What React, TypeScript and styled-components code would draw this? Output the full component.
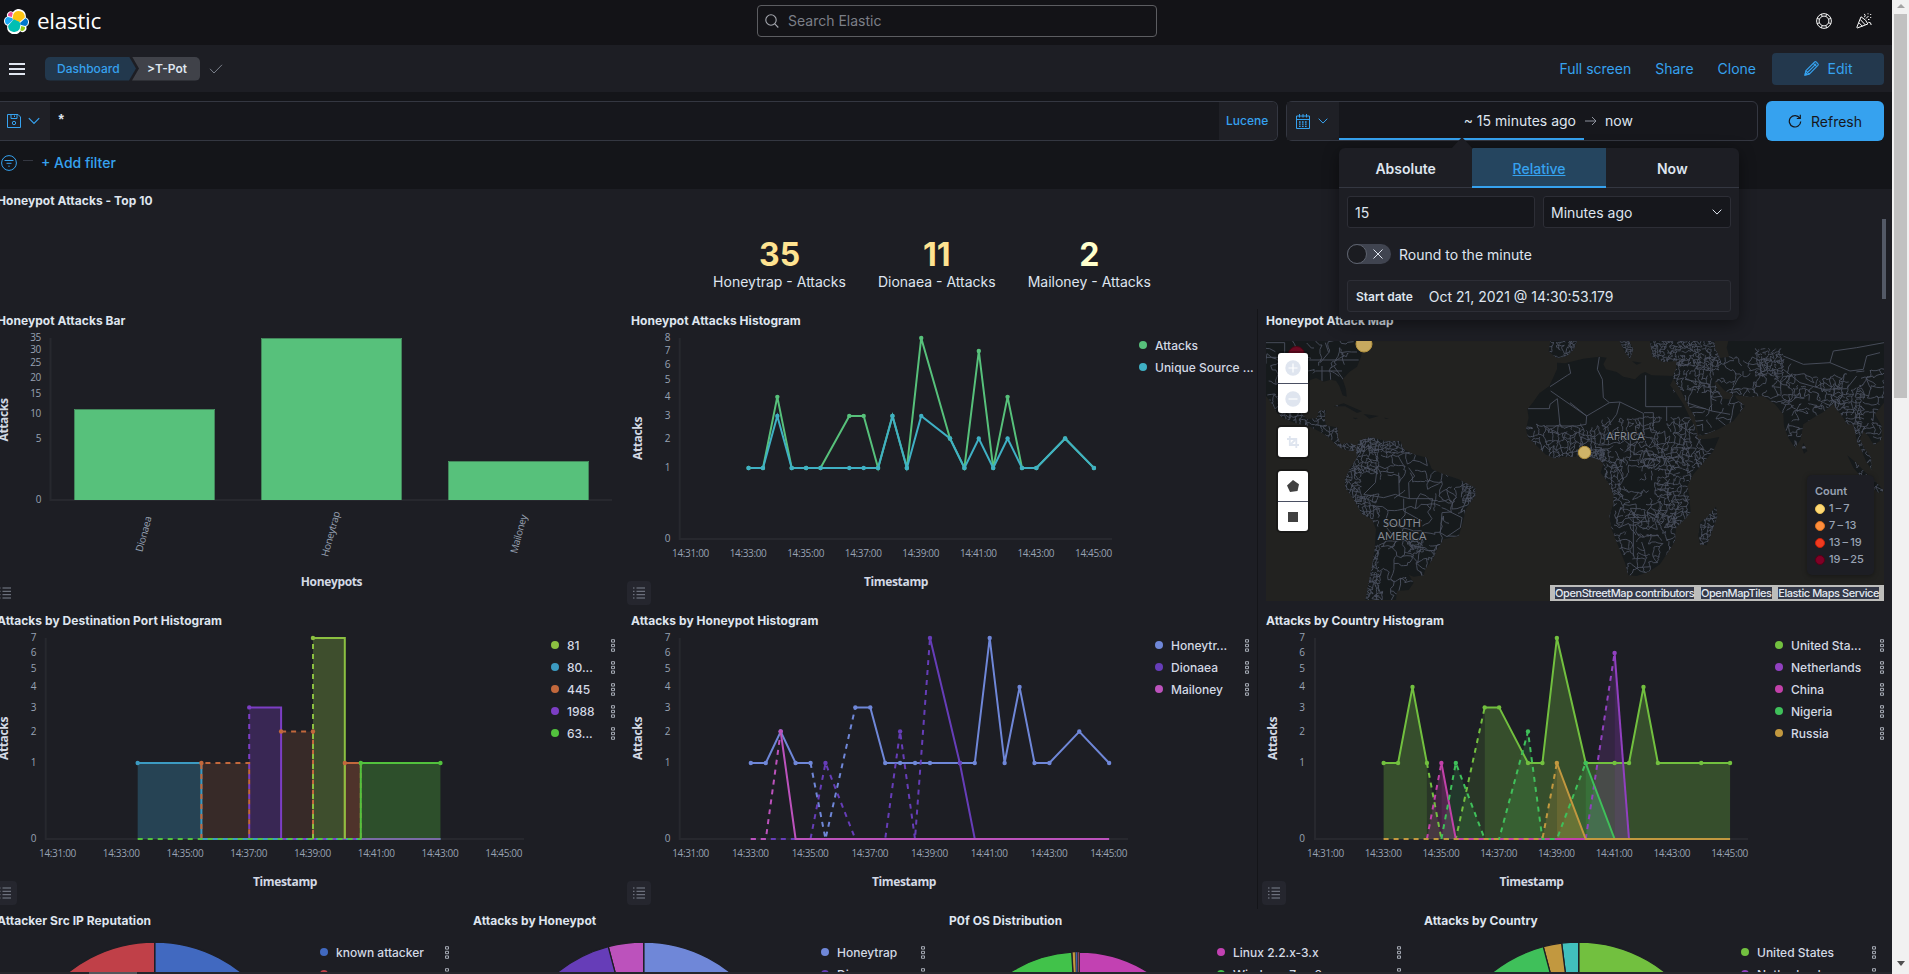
import React from 'react';
import styled, { createGlobalStyle, css } from 'styled-components';

const c = {
  page: '#141519',
  header: '#131317',
  panel: '#1d1e24',
  border: '#343741',
  text: '#dfe5ef',
  sub: '#98a2b3',
  link: '#36a2ef',
  axis: '#27282e',
};

const Global = createGlobalStyle`
  * { box-sizing: border-box; }
  html, body { margin: 0; padding: 0; background: ${c.page}; overflow: hidden; }
  body { font-family: Inter, "Liberation Sans", sans-serif; color: ${c.text}; font-size: 14px; }
  svg { display: block; flex: none; }
`;

/* ---------- shell ---------- */

const Page = styled.div`
  display: flex;
  width: 1909px;
  height: 974px;
  overflow: hidden;
`;

const Content = styled.div`
  width: 1892px;
  height: 974px;
  display: flex;
  flex-direction: column;
  overflow: hidden;
`;

const Scrollbar = styled.div`
  width: 17px;
  height: 974px;
  background: #f1f1f1;
  display: flex;
  flex-direction: column;
  align-items: center;
`;

const Thumb = styled.div`
  width: 13px;
  height: 384px;
  background: #c1c1c1;
  margin-bottom: auto;
`;

const Arrow = styled.div<{ $down?: boolean }>`
  height: ${(p) => (p.$down ? 13 : 14)}px;
  padding-top: ${(p) => (p.$down ? 0 : 4)}px;
  &::before {
    content: '';
    display: block;
    border: 4px solid transparent;
    ${(p) =>
      p.$down
        ? css`border-top: 5px solid #505050; border-bottom: 0;`
        : css`border-bottom: 4px solid #a3a3a3; border-top: 0;`}
  }
`;

const TopBar = styled.header`
  height: 45px;
  flex: none;
  background: ${c.header};
  display: flex;
  align-items: center;
  padding: 0 20px 3px 4px;
`;

const Brand = styled.div`
  display: flex;
  align-items: center;
  gap: 8px;
  width: 753px;
  font: 400 22.5px/30px "Open Sans", sans-serif;
  letter-spacing: -0.3px;
  color: #fff;
`;

const Search = styled.div`
  width: 400px;
  height: 32px;
  border: 1px solid #5c5d61;
  border-radius: 4px;
  display: flex;
  align-items: center;
  gap: 9px;
  padding: 0 0 1px 7px;
  color: #7c7f87;
  margin-right: auto;
`;

const TopIcons = styled.div`
  display: flex;
  gap: 24px;
`;

const NavBar = styled.nav`
  height: 47px;
  flex: none;
  background: ${c.panel};
  display: flex;
  align-items: center;
  padding: 0 8px 0 9px;
`;

const Crumbs = styled.div`
  display: flex;
  align-items: center;
  margin-left: 20px;
  font-size: 12px;
  line-height: 24px;
`;

const Crumb = styled.span<{ $last?: boolean }>`
  height: 24px;
  background: ${(p) => (p.$last ? '#404249' : '#22384d')};
  color: ${(p) => (p.$last ? c.text : c.link)};
  font-weight: ${(p) => (p.$last ? 600 : 500)};
  width: ${(p) => (p.$last ? 68 : 91)}px;
  padding-left: ${(p) => (p.$last ? 15 : 12)}px;
  margin-left: ${(p) => (p.$last ? -4 : 0)}px;
  margin-right: ${(p) => (p.$last ? 9 : 0)}px;
  border-radius: ${(p) => (p.$last ? '0 5px 5px 0' : '5px 0 0 5px')};
  clip-path: ${(p) =>
    p.$last
      ? 'polygon(0 0, 100% 0, 100% 100%, 0 100%, 7px 50%)'
      : 'polygon(0 0, calc(100% - 7px) 0, 100% 50%, calc(100% - 7px) 100%, 0 100%)'};
`;

const NavLinks = styled.div`
  display: flex;
  align-items: center;
  gap: 24px;
  margin-left: auto;
  color: ${c.link};
  line-height: 20px;
`;

const EditButton = styled.div`
  width: 112px;
  height: 32px;
  margin-left: -8px;
  border-radius: 4px;
  background: #23384d;
  display: flex;
  align-items: center;
  justify-content: center;
  gap: 9px;
`;

/* ---------- query bar ---------- */

const QueryRow = styled.div`
  height: 49px;
  flex: none;
  display: flex;
  padding: 9px 8px 0 0;
  background: ${c.page};
`;

const QueryBox = styled.div`
  width: 1278px;
  flex: none;
  height: 40px;
  border: 1px solid ${c.border};
  border-left: 0;
  border-radius: 0 6px 6px 0;
  background: #16171c;
  display: flex;
  overflow: hidden;
  line-height: 38px;
`;

const QueryAddon = styled.div<{ $w: number; $gap?: number; $pad?: number }>`
  width: ${(p) => p.$w}px;
  flex: none;
  height: 100%;
  background: #1f2026;
  display: flex;
  align-items: center;
  gap: ${(p) => p.$gap ?? 0}px;
  padding-left: ${(p) => p.$pad ?? 0}px;
  color: ${c.link};
  font-size: 12px;
  font-weight: 500;
`;

const QueryText = styled.div`
  flex: 1;
  padding-left: 7px;
  font-family: "Liberation Mono", monospace;
  font-weight: 700;
`;

const DatePicker = styled.div`
  position: relative;
  width: 472px;
  flex: none;
  height: 40px;
  margin: 0 8px;
  border: 1px solid ${c.border};
  border-radius: 6px;
  background: #16171c;
  display: flex;
`;

const DateStart = styled.div`
  width: 245px;
  text-align: right;
  padding-right: 8px;
  line-height: 38px;
  border-bottom: 2px solid ${c.link};
  height: 38px;
`;

const DateEnd = styled.div`
  display: flex;
  align-items: center;
  gap: 8px;
  padding: 0 0 1px 1px;
`;

const Refresh = styled.div`
  width: 118px;
  flex: none;
  height: 40px;
  border-radius: 6px;
  background: ${c.link};
  color: #16171b;
  display: flex;
  align-items: center;
  justify-content: center;
  gap: 9px;
`;

const FilterRow = styled.div`
  height: 48px;
  flex: none;
  display: flex;
  align-items: center;
  padding: 0 0 5px 1px;
  color: ${c.link};
  font-weight: 500;
  background: ${c.page};
`;

const FilterDash = styled.i`
  width: 10px;
  height: 1px;
  margin: 0 8px 4px 6px;
  background: #343741;
`;

/* ---------- popover ---------- */

const Popover = styled.div`
  position: absolute;
  left: 52px;
  top: 46px;
  width: 400px;
  height: 172px;
  border-radius: 6px;
  background: ${c.panel};
  box-shadow: 0 4px 16px rgba(0, 0, 0, 0.45);
  z-index: 5;
`;

const PopArrow = styled.svg`
  position: absolute;
  left: 112px;
  top: -11px;
`;

const Tabs = styled.div`
  display: flex;
  height: 40px;
  border-bottom: 1px solid ${c.border};
`;

const Tab = styled.div<{ $on?: boolean }>`
  flex: 1;
  height: 40px;
  line-height: 42px;
  text-align: center;
  font-weight: ${(p) => (p.$on ? 500 : 600)};
  ${(p) =>
    p.$on &&
    css`
      color: ${c.link};
      background: #25455f;
      text-decoration: underline;
      border-bottom: 2px solid ${c.link};
    `}
`;

const PopBody = styled.div`
  padding: 8px;
  display: flex;
  flex-direction: column;
  gap: 16px;
`;

const FieldRow = styled.div`
  display: flex;
  gap: 8px;
`;

const Field = styled.div<{ $tone?: string }>`
  flex: 1;
  height: 32px;
  border: 1px solid #2d2e36;
  border-radius: 3px;
  background: ${(p) => p.$tone ?? '#16171c'};
  display: flex;
  align-items: center;
  justify-content: space-between;
  padding: 0 8px 0 7px;
`;

const SwitchRow = styled.div`
  display: flex;
  align-items: center;
  gap: 8px;
  height: 20px;
`;

const Switch = styled.div`
  width: 44px;
  height: 20px;
  border-radius: 10px;
  background: #404450;
  display: flex;
  align-items: center;
  justify-content: space-between;
  padding-right: 8px;
`;

const Knob = styled.i`
  width: 20px;
  height: 20px;
  border-radius: 50%;
  background: #1b1c21;
  border: 1px solid #5f6470;
`;

const DateLabel = styled.b`
  font-size: 12px;
  font-weight: 600;
  margin: 0 16px 0 1px;
`;

const DateValue = styled.span`
  margin-right: auto;
`;

/* ---------- dashboard ---------- */

const Dashboard = styled.main`
  width: 1903px;
  height: 783px;
  flex: none;
  margin-left: -11px;
  background: ${c.panel};
  overflow: hidden;
`;

const Row = styled.div<{ $cols: string; $h: number; $line?: boolean }>`
  display: grid;
  grid-template-columns: ${(p) => p.$cols};
  height: ${(p) => p.$h}px;
  ${(p) => p.$line && css`& > :last-child { box-shadow: -1px 0 0 #141519; }`}
`;

const PanelBox = styled.section`
  display: flex;
  flex-direction: column;
  overflow: hidden;
  min-width: 0;
`;

const PanelTitle = styled.h2`
  margin: 0;
  height: 24px;
  flex: none;
  padding-left: 8px;
  font-size: 12px;
  line-height: 24px;
  font-weight: 700;
  letter-spacing: 0.05px;
  white-space: nowrap;
`;

const PanelBody = styled.div`
  position: relative;
  display: flex;
  flex: 1;
  min-height: 0;
`;

const Metrics = styled.div`
  display: flex;
  flex: 1;
  justify-content: center;
  gap: 32px;
  padding: 25px 17px 0 0;
`;

const Metric = styled.div`
  text-align: center;
  line-height: 20px;
`;

const MetricValue = styled.div<{ $tone: string }>`
  font-size: 32px;
  line-height: 34px;
  font-weight: 700;
  color: ${(p) => p.$tone};
`;

const InnerThumb = styled.i`
  position: absolute;
  right: 6px;
  top: 6px;
  width: 4px;
  height: 80px;
  background: #535966;
`;

const Legend = styled.div<{ $w: number; $top: number }>`
  width: ${(p) => p.$w}px;
  padding-top: ${(p) => p.$top}px;
`;

const LegendItem = styled.div`
  display: flex;
  align-items: center;
  gap: 8px;
  height: 22px;
  font-size: 12px;
  font-weight: 500;
  color: #d3d9e4;
  white-space: nowrap;
`;

const Dot = styled.i<{ $c: string }>`
  width: 8px;
  height: 8px;
  flex: none;
  border-radius: 50%;
  background: ${(p) => p.$c};
`;

const LegendLabel = styled.span`
  flex: 1;
`;

const ListButton = styled.div<{ $plain?: boolean }>`
  position: absolute;
  left: 4px;
  bottom: 4px;
  width: 24px;
  height: 24px;
  border-radius: 4px;
  background: ${(p) => (p.$plain ? 'transparent' : '#25262e')};
  display: flex;
  align-items: center;
  justify-content: center;
`;

const BottomStrip = styled.div`
  height: 2px;
  flex: none;
  background: #25262c;
  padding-left: 89px;
  &::before {
    content: '';
    display: block;
    width: 48px;
    height: 2px;
    background: #55565c;
  }
`;

/* ---------- icons ---------- */

const Stroke = ({ w, h = w, vb, color = c.link, sw = 1, children }: any) => (
  <svg width={w} height={h} viewBox={vb ?? `0 0 ${w} ${h}`} fill="none" stroke={color} strokeWidth={sw}>
    {children}
  </svg>
);

const Chevron = ({ w = 12, color = c.link }: { w?: number; color?: string }) => (
  <Stroke w={w} h={8} vb="0 0 12 8" color={color} sw={1.2}>
    <path d="M.8 1.2 6 6.5l5.2-5.3" />
  </Stroke>
);

const Logo = () => (
  <svg width="25" height="25" viewBox="0 0 32 32">
    <path fill="#fff" d="M32 16.8a6.3 6.3 0 0 0-4.1-5.9A9.4 9.4 0 0 0 28 9.2 9.2 9.2 0 0 0 11.4 3.8a4.900 4.900 0 0 0-7.300 5.900A6.300 6.300 0 0 0 0 15.500a6.300 6.300 0 0 0 4.200 6 9.200 9.200 0 0 0 16.600 6.900 4.900 4.900 0 0 0 7.600-5.700A6.200 6.200 0 0 0 32 16.800" />
    <path fill="#FEC514" d="m12.600 13.800 7 3.200 7.100-6.200A7.900 7.900 0 0 0 12 6.600L10.800 12.700z" />
    <path fill="#00BFB3" d="M5.300 21.300a7.900 7.900 0 0 0 14.700 4.200l1.200-6.100-1.600-3-7.100-3.200z" />
    <path fill="#F04E98" d="m5.300 9.100 4.800 1.100 1.100-5.400a3.800 3.800 0 0 0-5.900 4.300" />
    <path fill="#1BA9F5" d="M4.900 10.300a5.300 5.300 0 0 0-.1 10l6.800-6.100-1.300-2.700z" />
    <path fill="#93C90E" d="M20.900 27.200a3.800 3.800 0 0 0 5.900-4.200L22.100 21.900z" />
    <path fill="#07C" d="m21.900 20.600 5.300 1.200a5.300 5.300 0 0 0 .1-10L20.400 17.900z" />
  </svg>
);

const ListIcon = () => (
  <Stroke w={14} h={12} color="#7d828f">
    <path d="M4.500 1h8.500M4.500 4.300h8.500M4.500 7.700h8.500M4.500 11h8.500M1 1h1.500M1 4.300h1.500M1 7.700h1.500M1 11h1.500" />
  </Stroke>
);

const MenuIcon = () => (
  <Stroke w={4} h={13} color="#a4a9b3" sw={1}>
    <path d="M.5.7h3v2.400h-3zM.5 5.300h3v2.400h-3zM.5 9.900h3v2.400h-3z" />
  </Stroke>
);

/* ---------- charts ---------- */

type Pt = [number, number];
type Line = { color: string; dash?: boolean; pts: Pt[]; fill?: number };
type ChartProps = {
  px: number;
  py: number;
  w: number;
  axisX: number;
  axisR: number;
  t0: number;
  perMin: number;
  max: number;
  titleX: number;
  attX: number;
  labelR: number;
  lines: Line[];
  dots: { color: string; pts: Pt[] }[];
};

const AxisText = styled.text`
  font: 400 10px "Open Sans", "Noto Sans", sans-serif;
  letter-spacing: -0.35px;
  fill: #98a2b3;
`;

const AxisTitle = styled.text`
  font: 700 12px "Open Sans", "Noto Sans", sans-serif;
  letter-spacing: -0.35px;
  fill: #d3d9e4;
  text-anchor: middle;
`;

function TimeChart(p: ChartProps) {
  const top = p.py + 29;
  const bottom = top + 201;
  const X = (m: number) => p.t0 + (m - 31) * p.perMin;
  const Y = (v: number) => bottom - (Math.sqrt(v) / Math.sqrt(p.max)) * 201;
  const path = (pts: Pt[]) => pts.map(([m, v], i) => `${i ? 'L' : 'M'}${X(m).toFixed(1)} ${Y(v).toFixed(1)}`).join('');
  return (
    <svg width={p.w} height={276} viewBox={`${p.px} ${p.py + 24} ${p.w} 276`}>
      <path d={`M${p.axisX} ${top}V${bottom}H${p.axisR}`} fill="none" stroke={c.axis} strokeWidth="2" />
      {Array.from({ length: p.max + 1 }, (_, v) => (
        <AxisText key={v} x={p.labelR} y={Y(v) + 3.3} textAnchor="end">{v}</AxisText>
      ))}
      {[31, 33, 35, 37, 39, 41, 43, 45].map((m) => (
        <AxisText key={m} x={X(m) - 0.5} y={bottom + 18} textAnchor="middle">{`14:${m}:00`}</AxisText>
      ))}
      {p.lines.filter((l) => l.fill).map((l, i) => (
        <path
          key={i}
          d={`${path(l.pts)}L${X(l.pts[l.pts.length - 1][0])} ${bottom}L${X(l.pts[0][0])} ${bottom}Z`}
          fill={l.color}
          fillOpacity={l.fill}
        />
      ))}
      {p.lines.map((l, i) => (
        <path key={i} d={path(l.pts)} fill="none" stroke={l.color} strokeWidth="2" strokeDasharray={l.dash ? '5 5' : undefined} />
      ))}
      {p.dots.map((d, i) => (
        <g key={i} fill={d.color}>
          {d.pts.map(([m, v], j) => <circle key={j} cx={X(m)} cy={Y(v)} r="2.2" />)}
        </g>
      ))}
      <AxisTitle x={p.titleX} y={bottom + 47}>Timestamp</AxisTitle>
      <AxisTitle transform={`translate(${p.attX + 4} ${top + 100.5}) rotate(-90)`}>Attacks</AxisTitle>
    </svg>
  );
}

function BarChart() {
  const ticks = [0, 5, 10, 15, 20, 25, 30, 35];
  const Y = (v: number) => 500 - (Math.sqrt(v) / Math.sqrt(35)) * 162;
  const bars: [string, number, number, number][] = [
    ['Dionaea', 74, 409, 144],
    ['Honeytrap', 261, 338, 331],
    ['Mailoney', 448, 461, 519],
  ];
  return (
    <svg width={634} height={276} viewBox="-11 333 634 276">
      <path d="M50.5 338V500H612" fill="none" stroke={c.axis} strokeWidth="2" />
      {ticks.map((v) => (
        <AxisText key={v} x="41" y={Y(v) + 3.3} textAnchor="end">{v}</AxisText>
      ))}
      {bars.map(([name, x, y, lx]) => (
        <g key={name}>
          <rect x={x} y={y} width="141" height={500 - y} fill="#57c17b" />
          <path d={`M${x + 0.5} 500V${y + 0.5}h140V500`} fill="none" stroke="#43875b" />
          <AxisText transform={`translate(${lx + 3} 535) rotate(-75)`} textAnchor="middle">{name}</AxisText>
        </g>
      ))}
      <AxisTitle x="331.5" y="586">Honeypots</AxisTitle>
      <AxisTitle transform="translate(8 420) rotate(-90)">Attacks</AxisTitle>
    </svg>
  );
}

type Slice = [number, number, string];
function Pie({ px, w, cx, top, r, slices }: { px: number; w: number; cx: number; top: number; r: number; slices: Slice[] }) {
  const cy = top + r;
  const at = (a: number) => `${cx + r * Math.sin((a * Math.PI) / 180)} ${cy - r * Math.cos((a * Math.PI) / 180)}`;
  return (
    <svg width={w} height={39} viewBox={`${px} 933 ${w} 39`}>
      {slices.map(([a, b, color], i) => (
        <path key={i} d={`M${cx} ${cy}L${at(a)}A${r} ${r} 0 0 1 ${at(b)}Z`} fill={color} stroke={c.panel} strokeWidth={b - a < 3 ? 0.4 : 1.3} />
      ))}
    </svg>
  );
}

const PanelLegend = ({ items, w, top = 1, menu = true }: { items: [string, string][]; w: number; top?: number; menu?: boolean }) => (
  <Legend $w={w} $top={top}>
    {items.map(([label, color]) => (
      <LegendItem key={label}>
        <Dot $c={color} />
        <LegendLabel>{label}</LegendLabel>
        {menu && <MenuIcon />}
      </LegendItem>
    ))}
  </Legend>
);

/* ---------- map ---------- */

const MapFrame = styled.div`
  position: relative;
  width: 618px;
  height: 260px;
  margin: 8px 0 0 8px;
  overflow: hidden;
  background: #222220;
`;

const MapControls = styled.div`
  position: absolute;
  left: 12px;
  top: 12px;
  display: flex;
  flex-direction: column;
  gap: 14px;
`;

const ControlGroup = styled.div`
  background: #fff;
  border-radius: 3px;
  box-shadow: 0 0 0 2px rgba(0, 0, 0, 0.25);
`;

const Control = styled.div`
  width: 30px;
  height: 30px;
  display: flex;
  align-items: center;
  justify-content: center;
  & + & { border-top: 1px solid #4a4f62; }
`;

const MapLegend = styled.div`
  position: absolute;
  left: 541px;
  top: 134px;
  width: 67px;
  height: 100px;
  border-radius: 5px;
  background: ${c.panel};
  box-shadow: 0 1px 5px rgba(0, 0, 0, 0.35);
  padding: 8px 0 0 8px;
  font-size: 11px;
  line-height: 17px;
  color: #98a2b3;
  font-weight: 500;
`;

const MapLegendTitle = styled.div`
  font-weight: 600;
`;

const MapLegendRow = styled.div`
  display: flex;
  align-items: center;
  gap: 4px;
  word-spacing: -0.8px;
`;

const Bullet = styled.i<{ $c: string; $b: string }>`
  width: 10px;
  height: 10px;
  border-radius: 50%;
  background: ${(p) => p.$c};
  border: 1px solid ${(p) => p.$b};
`;

const Attribution = styled.div`
  position: absolute;
  right: 0;
  bottom: 0;
  width: 334px;
  height: 16px;
  background: #bdbdbb;
  display: flex;
  align-items: center;
  justify-content: space-between;
  padding: 0 5px;
  font-size: 11px;
  line-height: 12px;
  letter-spacing: -0.42px;
  font-weight: 500;
  & > span { background: #343847; color: #e3e8f0; white-space: nowrap; }
`;

const MapText = styled.text`
  font: 400 11px Lato, sans-serif;
  fill: #868a93;
  text-anchor: middle;
  stroke: #15191b;
  stroke-width: 1.5px;
  paint-order: stroke;
`;

let seed = 11;
const rnd = () => {
  seed = (seed * 16807) % 2147483647;
  return seed / 2147483647;
};

/* Irregular district borders: a jittered grid whose edges bend and drop out at random. */
function mesh(x0: number, y0: number, x1: number, y1: number, step: number, keep = 0.72) {
  const nx = Math.ceil((x1 - x0) / step);
  const ny = Math.ceil((y1 - y0) / step);
  const pts: Pt[][] = [];
  for (let j = 0; j <= ny; j++) {
    pts.push([]);
    for (let i = 0; i <= nx; i++) pts[j].push([x0 + (i + (rnd() - 0.5) * 1.15) * step, y0 + (j + (rnd() - 0.5) * 1.15) * step]);
  }
  let d = '';
  const seg = (a: Pt, b: Pt) => {
    if (rnd() > keep) return;
    const q = step * 0.4;
    const m1 = [a[0] * 0.66 + b[0] * 0.34 + (rnd() - 0.5) * q, a[1] * 0.66 + b[1] * 0.34 + (rnd() - 0.5) * q];
    const m2 = [a[0] * 0.34 + b[0] * 0.66 + (rnd() - 0.5) * q, a[1] * 0.34 + b[1] * 0.66 + (rnd() - 0.5) * q];
    d += `M${a[0].toFixed(0)} ${a[1].toFixed(0)}L${m1[0].toFixed(0)} ${m1[1].toFixed(0)}L${m2[0].toFixed(0)} ${m2[1].toFixed(0)}L${b[0].toFixed(0)} ${b[1].toFixed(0)}`;
  };
  for (let j = 0; j <= ny; j++)
    for (let i = 0; i <= nx; i++) {
      if (i < nx) seg(pts[j][i], pts[j][i + 1]);
      if (j < ny) seg(pts[j][i], pts[j + 1][i]);
    }
  return d;
}

const WEST_LAND =
  'M12 15H300L298 60 285 92 262 108 242 130 252 160 254 182 242 178 232 150 222 134 205 131 185 137 162 126 145 132 130 150 115 185 112 225 135 250 165 246 170 225 192 222 188 250 192 268 228 275 228 305 236 325 262 320 284 330 275 345 250 342 225 330 205 308 180 290 140 270 100 262 62 246 44 228 20 190 12 180Z' +
  'M282 342 290 315 325 303 370 315 415 315 425 340 455 355 495 365 510 400 545 415 590 430 640 455 640 480 612 518 602 560 590 600 545 610 525 640 515 665 490 700 485 718 455 722 440 716 455 740 440 762 405 765 402 792H310L320 740 330 690 338 640 342 580 330 550 300 535 275 490 250 455 248 430 265 395 285 365Z' +
  'M215 211 245 202 300 226 285 231 250 211ZM305 234 350 240 322 248ZM272 245 288 246 280 250ZM366 245 380 247 372 249Z' +
  'M865 15H945L936 40 912 62 884 66 860 46Z';

const EAST_LAND =
  'M-39 80-39 100-62 150-92 172-112 200-128 220-124 245-132 280-126 305-99 330-74 355-49 367-19 362 16 362 34 352 60 362 90 372 100 385 92 410 115 440 130 475 130 505 118 540 125 580 145 630 165 680 175 718 200 720 235 708 270 685 300 640 315 615 318 575 345 550 362 530 358 480 352 450 370 415 400 380 430 345 448 303 420 308 385 310 378 280 360 245 340 205 318 170 300 148 310 128 330 160 350 200 375 245 385 297 400 298 445 280 490 255 525 210 500 188 492 172 480 190 460 188 450 170 432 140 440 138 465 165 495 178 540 182 580 180 615 205 640 235 642 270 655 305 675 335 692 310 700 265 730 245 760 228 790 205 800 220 820 245 830 265 850 265 862 320 875 345 888 375 905 402 903 365 882 335 870 310 880 285 895 300 912 328 935 310 935 270 915 235 942 200V15H475L470 35 478 62 450 66 436 40 433 15H240L246 60 280 78 320 75 318 100 308 120 245 118 225 108 212 114 195 130 160 122 140 108 108 100 100 85 110 65 88 62 40 68 0 78-15 82Z' +
  'M438 512 442 540 430 575 410 628 390 625 385 600 390 560 415 540 430 520Z' +
  'M700 320 712 345 702 353 696 335ZM832 358 860 382 885 408 920 440 942 465 925 470 890 440 850 395Z' +
  'M-3 15H20L10 40-3 55ZM148 15H178L190 40 180 68 166 50ZM186 76 215 80 200 86Z';

const WEST_LINES =
  mesh(12, 15, 300, 140, 26, 0.5) + mesh(20, 180, 230, 330, 12, 0.7) + mesh(230, 300, 420, 345, 9) +
  mesh(270, 300, 345, 410, 10) + mesh(245, 400, 290, 500, 10) + mesh(280, 480, 345, 560, 11) +
  mesh(355, 340, 520, 420, 22, 0.6) + mesh(510, 400, 640, 520, 24, 0.6) + mesh(605, 445, 645, 500, 7) +
  mesh(350, 480, 600, 620, 38, 0.55) + mesh(310, 630, 345, 790, 8) + mesh(345, 620, 520, 790, 24, 0.6) +
  mesh(440, 612, 478, 645, 7) + mesh(860, 15, 945, 66, 11) +
  'M345 400 340 440 305 475 365 485 400 475 412 480 410 410M300 390 345 410M412 480 442 488 440 440 458 420 440 395M442 488 512 488 505 520M425 488 425 525 480 555M540 530 535 590 555 602 595 575 600 545 565 528ZM12 20H68V50M12 64H48M140 72H290M175 80 200 50 190 20M215 90 245 132M180 90V135M160 105H240';

const EAST_LINES =
  mesh(-130, 270, 100, 370, 13, 0.68) + mesh(20, 340, 100, 372, 6) + mesh(100, 250, 390, 380, 14, 0.62) +
  mesh(220, 340, 440, 400, 15, 0.6) + mesh(105, 375, 150, 500, 10) + mesh(150, 370, 300, 560, 23, 0.5) + mesh(265, 400, 360, 560, 11, 0.62) +
  mesh(120, 520, 320, 720, 17, 0.52) + mesh(385, 512, 445, 630, 9) +
  mesh(240, 15, 450, 80, 8, 0.6) + mesh(315, 70, 420, 160, 12, 0.62) + mesh(340, 150, 520, 290, 28, 0.45) + mesh(430, 65, 640, 185, 19, 0.55) +
  mesh(560, 40, 640, 120, 8, 0.55) + mesh(640, 120, 830, 215, 14, 0.58) + mesh(630, 215, 740, 335, 18, 0.6) +
  mesh(790, 160, 870, 320, 11, 0.6) + mesh(860, 100, 942, 240, 18, 0.55) + mesh(850, 235, 942, 330, 19, 0.55) + mesh(860, 330, 942, 470, 9, 0.55) +
  mesh(-3, 15, 20, 60, 7) + mesh(148, 15, 190, 70, 8) +
  'M227 118V212H335M88 62 82 100 97 130 100 185 118 200M118 200 50 240-58 165M-60 152-8 118 2 112-4 84M118 200 150 198 220 232V290M222 230H250V270M50 240 48 265 20 270H-72M-38 188-30 268M-38 188-60 205-62 218H-126M150 198 140 235 110 275M0 200 50 240M290 212V255M640 60 700 85 780 80 790 45 860 35 942 20M780 80 840 105 880 100 890 60 930 50M640 100 690 140 760 160 830 158 860 120M190 560V660M190 560 240 555M345 130 420 145 425 225 350 200M425 225 480 235';

function AttackMap() {
  return (
    <MapFrame>
      <svg width="618" height="260">
        <defs>
          <clipPath id="west"><path d={WEST_LAND} /></clipPath>
          <clipPath id="east"><path d={EAST_LAND} /></clipPath>
        </defs>
        <g transform="translate(-4 -5) scale(.33333)" strokeLinejoin="round">
          <path d={WEST_LAND} fill="#161a1c" />
          <path d={WEST_LINES} clipPath="url(#west)" fill="none" stroke="#4c5160" strokeWidth="2.7" />
        </g>
        <g transform="translate(304 -5) scale(.33333)" strokeLinejoin="round">
          <path d={EAST_LAND} fill="#161a1c" />
          <path d={EAST_LINES} clipPath="url(#east)" fill="none" stroke="#4c5160" strokeWidth="2.7" />
        </g>
        <MapText x="136" y="186">SOUTH</MapText>
        <MapText x="136" y="199">AMERICA</MapText>
        <MapText x="359.5" y="98.5">AFRICA</MapText>
        <circle cx="98" cy="3" r="8" fill="#c7a95f" stroke="#b3923f" />
        <circle cx="318.5" cy="111.5" r="6.2" fill="#d0b468" stroke="#b3923f" />
        <circle cx="30.5" cy="13.5" r="8" fill="#6b0a22" stroke="#4c0614" />
      </svg>
      <MapControls>
        <ControlGroup>
          <Control><svg width="16" height="16"><circle cx="8" cy="8" r="7.7" fill="#dfe5ef" /><path d="M8 3.5v9M3.5 8h9" stroke="#fff" strokeWidth="1.2" /></svg></Control>
          <Control><svg width="16" height="16"><circle cx="8" cy="8" r="7.7" fill="#dfe5ef" /><path d="M3.5 8h9" stroke="#fff" strokeWidth="1.2" /></svg></Control>
        </ControlGroup>
        <ControlGroup>
          <Control>
            <Stroke w={12} color="#dfe5ef" sw={1.8}><path d="M0 3h9.3v9M2.8 0v9H12M4 8l4-4" /></Stroke>
          </Control>
        </ControlGroup>
        <ControlGroup>
          <Control><svg width="14" height="14"><path d="M7 1 13 5.3 11.5 12 4 13 1 6.5Z" fill="#404040" /></svg></Control>
          <Control><svg width="10" height="10"><rect width="10" height="10" fill="#404040" /></svg></Control>
        </ControlGroup>
      </MapControls>
      <MapLegend>
        <MapLegendTitle>Count</MapLegendTitle>
        <MapLegendRow><Bullet $c="#fed976" $b="#e8bf52" />1 – 7</MapLegendRow>
        <MapLegendRow><Bullet $c="#fd8d3c" $b="#d96f1e" />7 – 13</MapLegendRow>
        <MapLegendRow><Bullet $c="#f03b20" $b="#c81f0a" />13 – 19</MapLegendRow>
        <MapLegendRow><Bullet $c="#800026" $b="#560016" />19 – 25</MapLegendRow>
      </MapLegend>
      <Attribution>
        <span>OpenStreetMap contributors</span>
        <span>OpenMapTiles</span>
        <span>Elastic Maps Service</span>
      </Attribution>
    </MapFrame>
  );
}

/* ---------- chart data ---------- */

const G = '#57c17b';
const B = '#3fb0c4';
const attacks: Pt[] = [[33, 1], [33.5, 1], [34, 4], [34.5, 1], [35, 1], [35.5, 1], [36.5, 3], [37, 3], [37.5, 1], [38, 3], [38.5, 1], [39, 8], [40, 2], [40.5, 1], [41, 7], [41.5, 1], [42, 4], [42.5, 1], [43, 1], [44, 2], [45, 1]];
const uniqueMap: Record<string, number> = { 34: 3, 36.5: 1, 37: 1, 39: 3, 41: 2, 42: 2 };
const unique: Pt[] = attacks.map(([m, v]) => [m, uniqueMap[m] ?? v]);

const P81 = '#8bc041', P80 = '#3c9bc2', P445 = '#c2683c', P1988 = '#7c3ec4', P63 = '#52c23d';
const portLines: Line[] = [
  { color: P80, pts: [[33.5, 1], [35.5, 1], [35.5, 0], [43, 0]], fill: 0.3 },
  { color: P445, dash: true, pts: [[35.5, 0], [35.5, 1], [37, 1], [37, 0]], fill: 0.16 },
  { color: P445, dash: true, pts: [[38, 2], [39, 2], [39, 0]], fill: 0.16 },
  { color: P445, pts: [[40, 0], [40, 1], [40.5, 1]], fill: 0.3 },
  { color: P445, dash: true, pts: [[40.5, 1], [40.5, 0]] },
  { color: P1988, dash: true, pts: [[37, 0], [37, 3]] },
  { color: P1988, pts: [[37, 3], [38, 3], [38, 0]], fill: 0.3 },
  { color: P1988, dash: true, pts: [[38, 0], [40.5, 0]] },
  { color: '#7a6aa6', pts: [[40.5, 0], [43, 0]] },
  { color: P81, dash: true, pts: [[39, 0], [39, 7]] },
  { color: P81, pts: [[39, 7], [40, 7], [40, 0]], fill: 0.3 },
  { color: P63, dash: true, pts: [[33.5, 0], [40.5, 0]] },
  { color: P63, pts: [[40.5, 0], [40.5, 1], [43, 1]], fill: 0.3 },
];

const HT = '#6f87d8', DI = '#663db8', MA = '#bc52bc';
const htA: Pt[] = [[33, 1], [33.5, 1], [34, 2], [34.5, 1], [35, 1]];
const htB: Pt[] = [[36.5, 3], [37, 3], [37.5, 1], [38, 1], [38.5, 1], [39, 1], [40, 1], [40.5, 1], [41, 7], [41.5, 1], [42, 4], [42.5, 1], [43, 1], [44, 2], [45, 1]];

const US = '#72c03f', NL = '#9140c0', CN = '#c241a9', NG = '#3fc05a', RU = '#c2983f';
const usA: Pt[] = [[33, 1], [33.5, 1], [34, 4], [34.5, 1]];
const usB: Pt[] = [[36.5, 3], [37, 3], [38, 1], [38.5, 1], [39, 7], [40, 1], [41, 1], [41.5, 1], [42, 4], [42.5, 1], [44, 1], [45, 1]];

const Panel = ({ title, children }: { title: string; children?: React.ReactNode }) => (
  <PanelBox>
    <PanelTitle>{title}</PanelTitle>
    <PanelBody>{children}</PanelBody>
  </PanelBox>
);

const ListToggle = ({ plain }: { plain?: boolean }) => (
  <ListButton $plain={plain}><ListIcon /></ListButton>
);

const THREE = '634px 635px 634px';
const FOUR = '476px 476px 475px 476px';

export default function App() {
  return (
    <Page>
      <Global />
      <Content>
        <TopBar>
          <Brand><Logo />elastic</Brand>
          <Search>
            <Stroke w={14} color="#a5a8af" sw={1.1}><circle cx="6" cy="6" r="5.2" /><path d="m9.8 9.8 3.5 3.7" /></Stroke>
            Search Elastic
          </Search>
          <TopIcons>
            <Stroke w={16} color="#fff" sw={0.95}>
              <circle cx="8" cy="8" r="7.4" /><circle cx="8" cy="8" r="4.9" />
              <path d="M5.400 1.200 6.200 3.500M10.600 1.200 9.800 3.500M5.400 14.800l.8-2.300M10.600 14.800l-.8-2.300M1.200 5.400l2.300.8M1.200 10.600l2.300-.8M14.800 5.400l-2.300.8M14.800 10.600l-2.300-.8" />
            </Stroke>
            <Stroke w={16} color="#fff" sw={1}>
              <path d="M5 3.800.9 14.200q-.2.900.7.700L11.800 11Q10.800 7 5 3.800ZM4.300 6.500l5 5.400M3 9.800l3.500 3.600M8.500 4.200Q10 2.500 8.300.9M12.300 9.300q2.900-.3 2.900 2.700M10 5.500l2.500-2.500M11.500.8h1M14.200 1.500h1M14.200 4.500h1M12 6.500h1.500" />
            </Stroke>
          </TopIcons>
        </TopBar>

        <NavBar>
          <Stroke w={16} h={14} color={c.text} sw={2}><path d="M0 2h16M0 7h16M0 12h16" /></Stroke>
          <Crumbs>
            <Crumb>Dashboard</Crumb>
            <Crumb $last>&gt;T-Pot</Crumb>
            <Stroke w={14} h={10} color="#7b808b"><path d="m1 4.800 4 4.200L13 .8" /></Stroke>
          </Crumbs>
          <NavLinks>
            <span>Full screen</span>
            <span>Share</span>
            <span>Clone</span>
            <EditButton>
              <Stroke w={15} sw={1.1}>
                <path d="M1 14l.8-4.200L10.600 1q.9-.7 1.800.2l1.400 1.400q.9.900.1 1.800L5.200 13.200ZM1.800 9.800l3.400 3.400M3.500 11.500l8.800-8.800M9.300 2.300l3.400 3.400" />
                <path d="M1 14l.5-2.500 2 2z" fill={c.link} />
              </Stroke>
              Edit
            </EditButton>
          </NavLinks>
        </NavBar>

        <QueryRow>
          <QueryBox>
            <QueryAddon $w={50} $gap={7} $pad={7}>
              <Stroke w={14} h={14}><path d="M.5.5h10.500l2.500 2.500v10.500H.5zM4 .5v4h6v-4M7.500 1.500v1.500" /><circle cx="7" cy="9" r="1.700" /></Stroke>
              <Chevron />
            </QueryAddon>
            <QueryText>*</QueryText>
            <QueryAddon $w={58} $pad={7}>Lucene</QueryAddon>
          </QueryBox>
          <DatePicker>
            <QueryAddon $w={52} $gap={8} $pad={9}>
              <Stroke w={14} h={15}><path d="M.5 2h13v12.500H.5zM.5 5.500h13M3.500 0v3.500M7 0v3.500M10.500 0v3.500" /><path d="M3 8h8M3 10.200h8M3 12.400h8" strokeDasharray="1.600 1.400" strokeWidth="1.300" /></Stroke>
              <Chevron w={10} />
            </QueryAddon>
            <DateStart>~ 15 minutes ago</DateStart>
            <DateEnd>
              <Stroke w={12} h={10} color="#8d929d"><path d="M0 5h11M7 1l4 4-4 4" /></Stroke>
              now
            </DateEnd>
            <Popover>
              <PopArrow width="22" height="12"><path d="M0 12 11 0l11 12z" fill={c.panel} /></PopArrow>
              <Tabs>
                <Tab>Absolute</Tab>
                <Tab $on>Relative</Tab>
                <Tab>Now</Tab>
              </Tabs>
              <PopBody>
                <FieldRow>
                  <Field>15</Field>
                  <Field>Minutes ago<Chevron w={10} color={c.text} /></Field>
                </FieldRow>
                <SwitchRow>
                  <Switch>
                    <Knob />
                    <Stroke w={10} color={c.text}><path d="m.5.5 9 9M9.500.5l-9 9" /></Stroke>
                  </Switch>
                  Round to the minute
                </SwitchRow>
                <FieldRow>
                  <Field $tone="#202127"><DateLabel>Start date</DateLabel><DateValue>Oct 21, 2021 @ 14:30:53.179</DateValue></Field>
                </FieldRow>
              </PopBody>
            </Popover>
          </DatePicker>
          <Refresh>
            <Stroke w={14} color="#16171b" sw={1.2}><path d="M11.800 4.200A5.700 5.700 0 1 0 12.700 7.500M12.300.8v3.700H8.800" /></Stroke>
            Refresh
          </Refresh>
        </QueryRow>

        <FilterRow>
          <Stroke w={16}><circle cx="8" cy="8" r="7.400" /><path d="M3.500 5.500h9M5.500 8.300h5M7.300 11.200h1.400" /></Stroke>
          <FilterDash />
          + Add filter
        </FilterRow>

        <Dashboard>
          <Row $cols="1903px" $h={120}>
            <Panel title="Honeypot Attacks - Top 10">
              <Metrics>
                <Metric><MetricValue $tone="#fee391">35</MetricValue>Honeytrap - Attacks</Metric>
                <Metric><MetricValue $tone="#fee391">11</MetricValue>Dionaea - Attacks</Metric>
                <Metric><MetricValue $tone="#ffffcc">2</MetricValue>Mailoney - Attacks</Metric>
              </Metrics>
              <InnerThumb />
            </Panel>
          </Row>

          <Row $cols={THREE} $h={300} $line>
            <Panel title="Honeypot Attacks Bar">
              <BarChart />
              <ListToggle plain />
            </Panel>
            <Panel title="Honeypot Attacks Histogram">
              <TimeChart
                px={623} py={309} w={516} axisX={679.7} axisR={1112} t0={691} perMin={28.78} max={8} titleX={896} attX={638} labelR={670}
                lines={[{ color: G, pts: attacks }, { color: B, pts: unique }]}
                dots={[{ color: G, pts: attacks }, { color: B, pts: unique }]}
              />
              <PanelLegend w={118} menu={false} items={[['Attacks', G], ['Unique Source ...', B]]} />
              <ListToggle />
            </Panel>
            <Panel title="Honeypot Attack Map"><AttackMap /></Panel>
          </Row>

          <Row $cols={THREE} $h={300} $line>
            <Panel title="Attacks by Destination Port Histogram">
              <TimeChart
                px={-11} py={609} w={562} axisX={45.7} axisR={524} t0={58} perMin={31.87} max={7} titleX={285} attX={4} labelR={36}
                lines={portLines}
                dots={[
                  { color: P80, pts: [[33.5, 1]] },
                  { color: P445, pts: [[35.5, 1], [38, 2], [39, 2], [40, 1]] },
                  { color: P1988, pts: [[37, 3]] },
                  { color: P81, pts: [[39, 7]] },
                  { color: P63, pts: [[40.5, 1], [43, 1]] },
                ]}
              />
              <PanelLegend w={64} items={[['81', P81], ['80...', P80], ['445', P445], ['1988', P1988], ['63...', P63]]} />
              <ListToggle />
            </Panel>
            <Panel title="Attacks by Honeypot Histogram">
              <TimeChart
                px={623} py={609} w={532} axisX={679.7} axisR={1128} t0={691.1} perMin={29.86} max={7} titleX={904} attX={638} labelR={670}
                lines={[
                  { color: HT, pts: htA },
                  { color: HT, dash: true, pts: [[35, 1], [35.5, 0], [36.5, 3]] },
                  { color: HT, pts: htB },
                  { color: DI, dash: true, pts: [[33, 0], [35, 0], [35.5, 1], [36.5, 0], [37.5, 0], [38, 2], [38.5, 0], [39, 7]] },
                  { color: DI, pts: [[39, 7], [40, 1], [40.5, 0], [45, 0]] },
                  { color: MA, dash: true, pts: [[33, 0], [33.5, 0], [34, 2]] },
                  { color: MA, pts: [[34, 2], [34.5, 0], [45, 0]] },
                ]}
                dots={[
                  { color: HT, pts: [...htA, ...htB] },
                  { color: DI, pts: [[35.5, 1], [38, 2], [39, 7], [40, 1]] },
                  { color: MA, pts: [[34, 2]] },
                ]}
              />
              <PanelLegend w={94} items={[['Honeytr...', HT], ['Dionaea', DI], ['Mailoney', MA]]} />
              <ListToggle />
            </Panel>
            <Panel title="Attacks by Country Histogram">
              <TimeChart
                px={1258} py={609} w={517} axisX={1315} axisR={1748} t0={1325.9} perMin={28.87} max={7} titleX={1531.5} attX={1272.5} labelR={1304.6}
                lines={[
                  { color: US, pts: usA, fill: 0.3 },
                  { color: US, dash: true, pts: [[34.5, 1], [35, 0], [35.5, 0], [36.5, 3]], fill: 0.15 },
                  { color: US, pts: usB, fill: 0.3 },
                  { color: NL, dash: true, pts: [[40, 0], [41, 6]], fill: 0.2 },
                  { color: NL, pts: [[41, 6], [41.5, 0]], fill: 0.3 },
                  { color: CN, dash: true, pts: [[34.5, 0], [35, 1]], fill: 0.2 },
                  { color: CN, pts: [[35, 1], [35.5, 0], [40, 0]], fill: 0.3 },
                  { color: NG, dash: true, pts: [[35, 0], [35.5, 1], [36.5, 0], [37, 0], [38, 2], [38.5, 0], [39, 0], [40, 1]], fill: 0.16 },
                  { color: NG, pts: [[40, 1], [41, 0]], fill: 0.3 },
                  { color: RU, dash: true, pts: [[33, 0], [38.5, 0], [39, 1]], fill: 0.2 },
                  { color: RU, pts: [[39, 1], [40, 0], [45, 0]], fill: 0.35 },
                ]}
                dots={[
                  { color: US, pts: [...usA, ...usB] },
                  { color: NL, pts: [[41, 6]] },
                  { color: CN, pts: [[35, 1]] },
                  { color: NG, pts: [[35.5, 1], [38, 2], [40, 1]] },
                  { color: RU, pts: [[39, 1]] },
                ]}
              />
              <PanelLegend w={109} items={[['United Sta...', US], ['Netherlands', NL], ['China', CN], ['Nigeria', NG], ['Russia', RU]]} />
              <ListToggle />
            </Panel>
          </Row>

          <Row $cols={FOUR} $h={63}>
            <Panel title="Attacker Src IP Reputation">
              <Pie px={-11} w={331} cx={154.7} top={942} r={138} slices={[[0, 120, '#4169c0'], [-120, 0, '#c04048']]} />
              <PanelLegend w={129} top={8} items={[['known attacker', '#4169c0'], ['mass scanner', '#c04048']]} />
            </Panel>
            <Panel title="Attacks by Honeypot">
              <Pie px={465} w={356} cx={643.7} top={942} r={138} slices={[[0, 120, HT], [-14.9, 0, MA], [-120, -14.9, DI]]} />
              <PanelLegend w={104} top={8} items={[['Honeytrap', HT], ['Dionaea', DI]]} />
            </Panel>
            <Panel title="P0f OS Distribution">
              <Pie px={941} w={276} cx={1079.3} top={952} r={127.7} slices={[[0, 120, '#c241b2'], [-0.9, 0, '#9c4a5c'], [-1.8, -0.9, '#3e66b8'], [-3.2, -1.8, RU], [-120, -3.4, '#41c24a']]} />
              <PanelLegend w={184} top={8} items={[['Linux 2.2.x-3.x', '#c241b2'], ['Windows 7 or 8', '#41c24a']]} />
            </Panel>
            <Panel title="Attacks by Country">
              <Pie px={1416} w={325} cx={1578.7} top={942} r={138} slices={[[0, 120, US], [-7.1, 0, '#41c0bc'], [-14.9, -7.1, RU], [-120, -14.9, NG]]} />
              <PanelLegend w={135} top={8} items={[['United States', US], ['Netherlands', NL]]} />
            </Panel>
          </Row>
        </Dashboard>
        <BottomStrip />
      </Content>
      <Scrollbar>
        <Arrow />
        <Thumb />
        <Arrow $down />
      </Scrollbar>
    </Page>
  );
}
